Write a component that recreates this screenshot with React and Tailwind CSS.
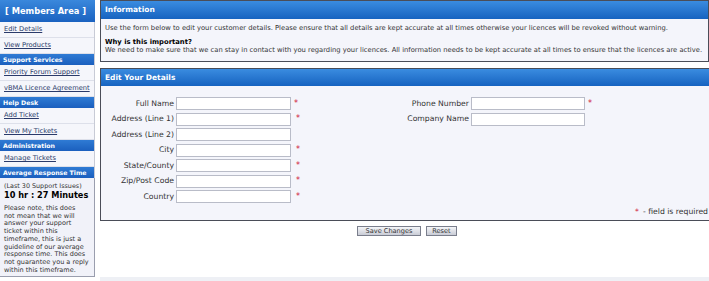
import React from 'react';

function SideLink({ children }) {
  return (
    <div className="h-[16px] flex items-center px-[4px] border-b border-[#dde0ea] text-[6.7px] text-[#2a3a6a] underline">
      {children}
    </div>
  );
}

function SideHead({ children }) {
  return (
    <div className="h-[11px] flex items-center px-[3px] bg-gradient-to-b from-[#2f7bd4] to-[#1b5fbe] text-white font-bold text-[6.2px]">
      {children}
    </div>
  );
}

function Field({ label, required, star = 'ml-[3px]' }) {
  return (
    <div className="flex items-center h-[15.5px]">
      <div className="w-[74px] text-right pr-[2px] text-[7.7px] text-[#333]">{label}</div>
      <div className="w-[115px] h-[13px] bg-white border border-[#b9bcc8]" />
      {required && <span className={`${star} text-[#d0203a] text-[8px]`}>*</span>}
    </div>
  );
}

export default function App() {
  const fields = [
    ['Full Name', true],
    ['Address (Line 1)', true],
    ['Address (Line 2)', false],
    ['City', true],
    ['State/County', true],
    ['Zip/Post Code', true],
    ['Country', true],
  ];

  const note = [
    'Please note, this does',
    'not mean that we will',
    'answer your support',
    'ticket within this',
    'timeframe, this is just a',
    'guideline of our average',
    'response time. This does',
    'not guarantee you a reply',
    'within this timeframe.',
  ];

  return (
    <div className="w-[709px] h-[281px] bg-white overflow-hidden flex font-['DejaVu_Sans',sans-serif]">
      {/* sidebar */}
      <div className="w-[95px] shrink-0 flex flex-col">
        <div className="h-[22px] flex items-center px-[5px] bg-gradient-to-b from-[#3a88dc] to-[#1a62c0] text-white font-bold text-[8.3px]">
          [ Members Area ]
        </div>
        <div className="bg-[#f5f6fb] border-r border-[#c8cbd6]">
          <SideLink>Edit Details</SideLink>
          <SideLink>View Products</SideLink>
          <SideHead>Support Services</SideHead>
          <SideLink>Priority Forum Support</SideLink>
          <SideLink>vBMA Licence Agreement</SideLink>
          <SideHead>Help Desk</SideHead>
          <SideLink>Add Ticket</SideLink>
          <SideLink>View My Tickets</SideLink>
          <SideHead>Administration</SideHead>
          <SideLink>Manage Tickets</SideLink>
          <SideHead>Average Response Time</SideHead>
        </div>
        <div className="bg-[#f1f2f9] border-r border-b border-[#9a9eae] h-[99px] px-[4px] pt-[4px] text-[#333] whitespace-nowrap">
          <div className="text-[6.4px] leading-[8px]">(Last 30 Support Issues)</div>
          <div className="text-[8.2px] font-bold text-black leading-[10px]">10 hr : 27 Minutes</div>
          <div className="mt-[5px] text-[6.5px] leading-[7.7px]">
            {note.map((l) => (
              <div key={l}>{l}</div>
            ))}
          </div>
        </div>
      </div>

      {/* main */}
      <div className="ml-[5px] flex-1 flex flex-col">
        <div className="border border-[#4a4d58] bg-[#f4f5fb] h-[62px]">
          <div className="h-[18px] flex items-center px-[4px] bg-gradient-to-b from-[#3a8ce0] to-[#1663c0] text-white font-bold text-[7.5px]">
            Information
          </div>
          <div className="px-[4px] pt-[4px] text-[6.75px] text-[#333] whitespace-nowrap">
            <div>Use the form below to edit your customer details. Please ensure that all details are kept accurate at all times otherwise your licences will be revoked without warning.</div>
            <div className="mt-[5px] font-bold text-black text-[6.8px] leading-[8px]">Why is this important?</div>
            <div className="leading-[8px]">We need to make sure that we can stay in contact with you regarding your licences. All information needs to be kept accurate at all times to ensure that the licences are active.</div>
          </div>
        </div>

        <div className="mt-[6px] border border-[#4a4d58] border-r-0 bg-[#f4f5fb] h-[153px] flex flex-col">
          <div className="h-[17px] flex items-center px-[4px] bg-gradient-to-b from-[#3a8ce0] to-[#1663c0] text-white font-bold text-[7.5px]">
            Edit Your Details
          </div>
          <div className="flex pt-[10px]">
            <div className="w-[300px] pl-[1px]">
              {fields.map(([label, req], i) => (
                <Field key={label} label={label} required={req} star={i === 0 ? 'ml-[3px]' : 'ml-[5px]'} />
              ))}
            </div>
            <div>
              <div className="flex items-center h-[15.5px]">
                <div className="w-[70px] text-right pr-[2px] text-[7.7px] text-[#333]">Phone Number</div>
                <div className="w-[114px] h-[13px] bg-white border border-[#b9bcc8]" />
                <span className="ml-[3px] text-[#d0203a] text-[8px]">*</span>
              </div>
              <div className="flex items-center h-[15.5px]">
                <div className="w-[70px] text-right pr-[2px] text-[7.7px] text-[#333]">Company Name</div>
                <div className="w-[114px] h-[13px] bg-white border border-[#b9bcc8]" />
              </div>
            </div>
          </div>
          <div className="flex justify-end pr-[1px] mt-[1px] text-[7.7px] text-[#333]">
            <span className="text-[#d0203a] mr-[4px]">*</span>- field is required
          </div>
        </div>

        <div className="flex gap-[5px] mt-[5px] pl-[257px]">
          <button className="w-[64px] h-[10px] text-[6.6px] leading-none text-[#333] border border-[#7a7e8c] bg-gradient-to-b from-[#f4f5f8] to-[#c9ccd6]">Save Changes</button>
          <button className="w-[31px] h-[10px] text-[6.6px] leading-none text-[#333] border border-[#7a7e8c] bg-gradient-to-b from-[#f4f5f8] to-[#c9ccd6]">Reset</button>
        </div>
        <div className="flex-1" />
        <div className="h-[4px] bg-[#eef0f5]" />
      </div>
    </div>
  );
}
